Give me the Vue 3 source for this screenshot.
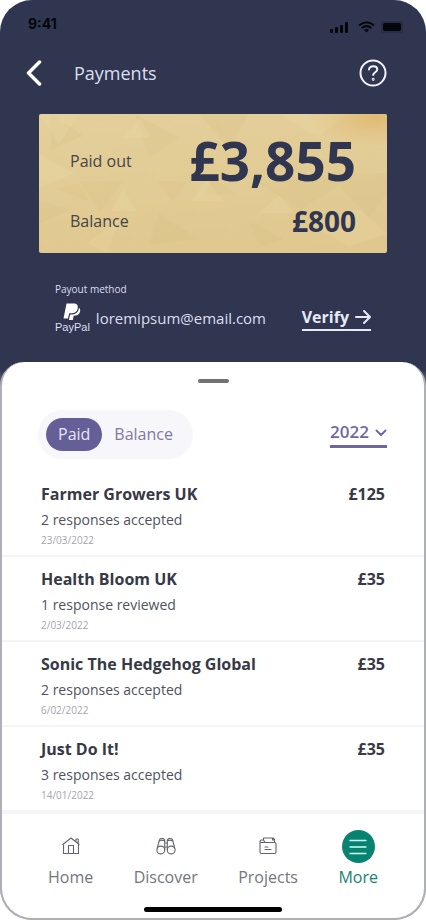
<script setup>
import { ref } from 'vue'

const tab = ref('paid')
const year = ref('2022')

const payments = [
  { name: 'Farmer Growers UK', note: '2 responses accepted', date: '23/03/2022', amount: '£125' },
  { name: 'Health Bloom UK', note: '1 response reviewed', date: '2/03/2022', amount: '£35' },
  { name: 'Sonic The Hedgehog Global', note: '2 responses accepted', date: '6/02/2022', amount: '£35' },
  { name: 'Just Do It!', note: '3 responses accepted', date: '14/01/2022', amount: '£35' },
]
</script>

<template>
  <div class="phone">
    <div class="status">
      <span class="clock">9:41</span>
      <svg class="signal" width="76" height="14" viewBox="0 0 76 14" aria-hidden="true">
        <rect x="1" y="9" width="3" height="4" rx="1" />
        <rect x="6" y="7" width="3" height="6" rx="1" />
        <rect x="11" y="5" width="3" height="8" rx="1" />
        <rect x="16" y="2" width="3" height="11" rx="1" />
        <g fill="none" stroke="#05060c" stroke-width="2">
          <path d="M30 5.5Q37.500 -1 45 5.500" />
          <path d="M32.500 8.200Q37.500 4 42.500 8.200" />
        </g>
        <path d="M35 10Q37.500 8 40 10L37.500 12.500Z" />
        <rect x="52" y="1" width="22" height="12" rx="3" fill="#282d45" />
        <rect x="54" y="3" width="18" height="8" rx="2" />
      </svg>
    </div>

    <header class="header">
      <button class="icon-button" aria-label="Back">
        <svg width="16" height="26" viewBox="0 0 16 26" fill="none" stroke="#fff" stroke-width="3.500" stroke-linecap="round" stroke-linejoin="round">
          <path d="M13.500 2L2.500 13L13.500 24" />
        </svg>
      </button>
      <h1 class="title">Payments</h1>
      <button class="icon-button" aria-label="Help">
        <svg width="28" height="28" viewBox="0 0 28 28" fill="none" stroke="#f2f4ff" stroke-width="2" stroke-linecap="round" stroke-linejoin="round">
          <circle cx="14" cy="14" r="12.500" />
          <path d="M10 10.500C10 6.200 18.300 6.300 18.300 10.600C18.300 13.300 14.200 13.200 14.200 16" />
          <circle cx="14.200" cy="20.300" r="0.500" />
        </svg>
      </button>
    </header>

    <section class="card">
      <svg class="texture" viewBox="0 0 348 140" preserveAspectRatio="none" aria-hidden="true">
        <defs>
          <radialGradient id="glow" cx="0.97" cy="0.03" r="0.2">
            <stop offset="0" stop-color="#dfae5c" stop-opacity="0.6" />
            <stop offset="1" stop-color="#dfb66c" stop-opacity="0" />
          </radialGradient>
        </defs>
        <g fill="#c9ac6c" opacity="0.1">
          <path d="M40 68L62 98L84 68ZM118 68L148 68L134 88ZM0 88L34 96L0 110ZM172 62L196 80L166 82ZM96 0L140 24L110 44ZM220 70L262 96L300 72L330 104L348 80V60L300 60ZM210 108L244 126L222 134ZM120 100L160 126L110 132ZM12 0L44 22L12 36ZM160 0L210 0L190 34ZM18 76L40 70L50 88Z" />
        </g>
        <g fill="#f5e4b5" opacity="0.16">
          <path d="M72 98L84 76L98 98ZM152 88L168 66L184 88ZM0 0H40L20 30ZM84 24L100 4L112 24ZM280 24L306 0H240ZM48 130L80 106L68 140ZM270 110L320 96L348 120L310 134ZM0 40L36 60L0 74ZM220 100L240 82L256 100Z" />
        </g>
        <rect width="348" height="140" fill="url(#glow)" />
      </svg>
      <dl class="totals">
        <div class="total">
          <dt>Paid out</dt>
          <dd class="amount-large">£3,855</dd>
        </div>
        <div class="total">
          <dt>Balance</dt>
          <dd class="amount-medium">£800</dd>
        </div>
      </dl>
    </section>

    <section class="payout">
      <h2 class="payout-label">Payout method</h2>
      <div class="payout-row">
        <span class="paypal">
          <svg width="18" height="18" viewBox="0 0 18 18" aria-hidden="true">
            <path fill="#fff" d="M3.500 0.500H10.500C14 0.500 15.500 2.500 14.700 5.700C14 8.900 11.700 10.300 8.500 10.300H6.200L5 15.500H0.500Z" />
            <path fill="#fff" d="M16 4.800C17.800 6.200 17.500 8.700 16.200 10.500C15 12.200 13.200 12.700 10.700 12.700L9.800 17H5.800L7.200 11.500H9.300C13 11.300 15.600 9 16 4.800Z" />
          </svg>
          <span class="paypal-name">PayPal</span>
        </span>
        <span class="email">loremipsum@email.com</span>
        <a class="verify" href="#verify">
          Verify
          <svg width="16" height="16" viewBox="0 0 16 16" fill="none" stroke="currentColor" stroke-width="2" stroke-linecap="round" stroke-linejoin="round" aria-hidden="true">
            <path d="M1 8H15M9 2L15 8L9 14" />
          </svg>
        </a>
      </div>
    </section>

    <main class="sheet">
      <div class="handle"></div>
      <div class="filters">
        <div class="tabs">
          <button class="tab" :class="{ active: tab === 'paid' }" @click="tab = 'paid'">Paid</button>
          <button class="tab" :class="{ active: tab === 'balance' }" @click="tab = 'balance'">Balance</button>
        </div>
        <div class="year">
          <select v-model="year" class="year-select" aria-label="Year">
            <option>2022</option>
            <option>2021</option>
          </select>
          <svg class="chevron" width="12" height="8" viewBox="0 0 12 8" fill="none" stroke="#7168a3" stroke-width="2" stroke-linecap="round" stroke-linejoin="round" aria-hidden="true">
            <path d="M1.500 1.500L6 6L10.500 1.500" />
          </svg>
        </div>
      </div>

      <ul class="list">
        <li v-for="p in payments" :key="p.date" class="item">
          <div>
            <h3 class="name">{{ p.name }}</h3>
            <p class="note">{{ p.note }}</p>
            <p class="date">{{ p.date }}</p>
          </div>
          <span class="amount">{{ p.amount }}</span>
        </li>
      </ul>

      <nav class="nav">
        <a class="nav-item" href="#home">
          <span class="nav-icon">
            <svg width="18" height="18" viewBox="0 0 18 18" fill="none" stroke="#62656d" stroke-width="1.100" stroke-linecap="round" stroke-linejoin="round">
              <path d="M0.800 7.500L9 1L17.200 7.500M1.500 7V16.500H16.500V7M14 5V2H16.200V6.500M6.500 16.500V8.500H11.500V16.500" />
            </svg>
          </span>
          Home
        </a>
        <a class="nav-item" href="#discover">
          <span class="nav-icon">
            <svg width="20" height="18" viewBox="0 0 20 18" fill="none" stroke="#62656d" stroke-width="1.100" stroke-linejoin="round">
              <circle cx="4.800" cy="13" r="3.900" />
              <circle cx="15.200" cy="13" r="3.900" />
              <path d="M1.200 11.500L3.300 3.500C3.600 .7 7.700 .5 8.700 3.300V13M18.800 11.500L16.700 3.500C16.400 .7 12.300 .5 11.300 3.300V13M3.300 4C4.500 3 7 3 8.700 4M11.300 4C13 3 15.500 3 16.700 4M8.700 6H11.300M8.700 10H11.300" />
            </svg>
          </span>
          Discover
        </a>
        <a class="nav-item" href="#projects">
          <span class="nav-icon">
            <svg width="18" height="18" viewBox="0 0 18 18" fill="none" stroke="#62656d" stroke-width="1.100" stroke-linecap="round" stroke-linejoin="round">
              <path d="M1 15V4.500Q1 3 2.500 3H4.500L6 5.500H15.500Q17 5.500 17 7V15Q17 16.500 15.500 16.500H2.500Q1 16.500 1 15ZM1 5.500H6M4.500 3V1H14L15.500 2.500V5.500M13.500 1V3H15.500M6 10H9M6 12.500H12" />
            </svg>
          </span>
          Projects
        </a>
        <a class="nav-item current" href="#more" aria-current="page">
          <span class="nav-icon round">
            <svg width="18" height="16" viewBox="0 0 18 16" fill="none" stroke="#d5fff5" stroke-width="1.300" stroke-linecap="round">
              <path d="M1 1.500H17M1 8H17M1 14.500H17" />
            </svg>
          </span>
          More
        </a>
      </nav>
      <div class="home-bar"></div>
    </main>
  </div>
</template>

<style>
body {
  background: #fff;
}
</style>

<style scoped>
* {
  box-sizing: border-box;
  margin: 0;
  padding: 0;
}

.phone {
  display: flex;
  flex-direction: column;
  min-height: 100vh;
  border-radius: 32px;
  background: linear-gradient(#30364f 0 370px, #afb0b6 400px);
  font-family: "Open Sans", "Noto Sans", sans-serif;
  color: #3b3d49;
}

button {
  border: 0;
  background: none;
  font: inherit;
  cursor: pointer;
}

a {
  text-decoration: none;
}

.status {
  display: flex;
  align-items: center;
  justify-content: space-between;
  height: 48px;
  padding: 4px 21px 4px 28px;
}

.clock {
  font: 700 14px/20px Inter, sans-serif;
  color: #05060c;
}

.signal {
  fill: #05060c;
  margin-top: 6px;
}

.header {
  display: flex;
  align-items: center;
  height: 50px;
  padding: 0 39px 0 26px;
}

.icon-button {
  display: flex;
}

.title {
  flex: 1;
  padding-left: 32px;
  font-size: 18px;
  line-height: 24px;
  font-weight: 400;
  color: #dcdff2;
}

.card {
  position: relative;
  margin: 16px 39px 0;
  border-radius: 2px;
  overflow: hidden;
  background: linear-gradient(175deg, #e4ce9a, #e2cc95 50%, #dfc78d);
}

.texture {
  position: absolute;
  inset: 0;
  width: 100%;
  height: 100%;
}

.totals {
  position: relative;
  padding: 14px 31px 5px;
}

.total {
  display: flex;
  align-items: center;
  justify-content: space-between;
  font-size: 16px;
  line-height: 20px;
  color: #43454b;
}

.amount-large,
.amount-medium {
  font-weight: 700;
  color: #30364f;
}

.amount-large {
  font-size: 53px;
  line-height: 66px;
}

.amount-medium {
  font-size: 28px;
  line-height: 54px;
}

.payout {
  padding: 29px 55px 25px;
  color: #dcdff2;
}

.payout-label {
  font: 400 10px/14px "Open Sans", sans-serif;
}

.payout-row {
  display: flex;
  align-items: center;
  height: 38px;
  margin-top: 3px;
}

.paypal {
  display: flex;
  flex-direction: column;
  align-items: center;
}

.paypal-name {
  font: 400 11px/12px "Liberation Sans", sans-serif;
}

.email {
  flex: 1;
  padding-left: 6px;
  font-size: 15px;
  line-height: 24px;
}

.verify {
  display: flex;
  align-items: center;
  gap: 6px;
  border-bottom: 2px solid #e6e9f8;
  font-size: 16px;
  line-height: 24px;
  font-weight: 700;
  color: #e6e9f8;
}

.sheet {
  flex: 1;
  display: flex;
  flex-direction: column;
  border: solid #afb0b6;
  border-width: 0 2px 2px;
  border-radius: 24px 24px 32px 32px;
  background: #fff;
}

.handle {
  align-self: center;
  width: 31px;
  height: 4px;
  margin-top: 17px;
  border-radius: 2px;
  background: #707372;
}

.filters {
  display: flex;
  align-items: center;
  justify-content: space-between;
  padding: 27px 37px 0 36px;
}

.tabs {
  display: flex;
  padding: 8px;
  border-radius: 25px;
  background: #f7f6fb;
}

.tab {
  padding: 0 12px;
  border-radius: 17px;
  font-size: 16px;
  line-height: 33px;
  color: #81799f;
}

.tab.active {
  background: #655f98;
  color: #e9e6fa;
}

.year {
  position: relative;
  margin-bottom: 2px;
}

.year-select {
  appearance: none;
  width: 57px;
  height: 28px;
  border: 0;
  border-bottom: 3px solid #6f669f;
  border-radius: 0;
  background: none;
  font: 600 17px/24px "Open Sans", sans-serif;
  color: #7168a3;
}

.chevron {
  position: absolute;
  top: 9px;
  right: 0;
  pointer-events: none;
}

.list {
  padding-top: 13px;
  list-style: none;
}

.item {
  display: flex;
  justify-content: space-between;
  padding: 10px 39px 8px;
  border-bottom: 2px solid #f5f5f8;
}

.item:last-child {
  border-bottom-width: 4px;
}

.name,
.amount {
  font-size: 16px;
  line-height: 24px;
  font-weight: 700;
  color: #373945;
}

.note {
  font-size: 14px;
  line-height: 28px;
  color: #50525e;
}

.date {
  font-size: 10px;
  line-height: 13px;
  color: #a4a5ab;
}

.nav {
  display: flex;
  justify-content: space-between;
  margin-top: auto;
  padding: 14px 46px 0;
}

.nav-item {
  display: flex;
  flex-direction: column;
  align-items: center;
  gap: 2px;
  font-size: 16px;
  line-height: 24px;
  color: #74767c;
}

.nav-icon {
  display: flex;
  align-items: center;
  justify-content: center;
  width: 33px;
  height: 33px;
  padding-bottom: 2px;
}

.nav-icon.round {
  padding: 0;
  border-radius: 50%;
  background: #078371;
}

.nav-item.current {
  color: #178474;
}

.home-bar {
  align-self: center;
  width: 138px;
  height: 5px;
  margin: 18px 0 6px;
  border-radius: 3px;
  background: #000;
}
</style>
